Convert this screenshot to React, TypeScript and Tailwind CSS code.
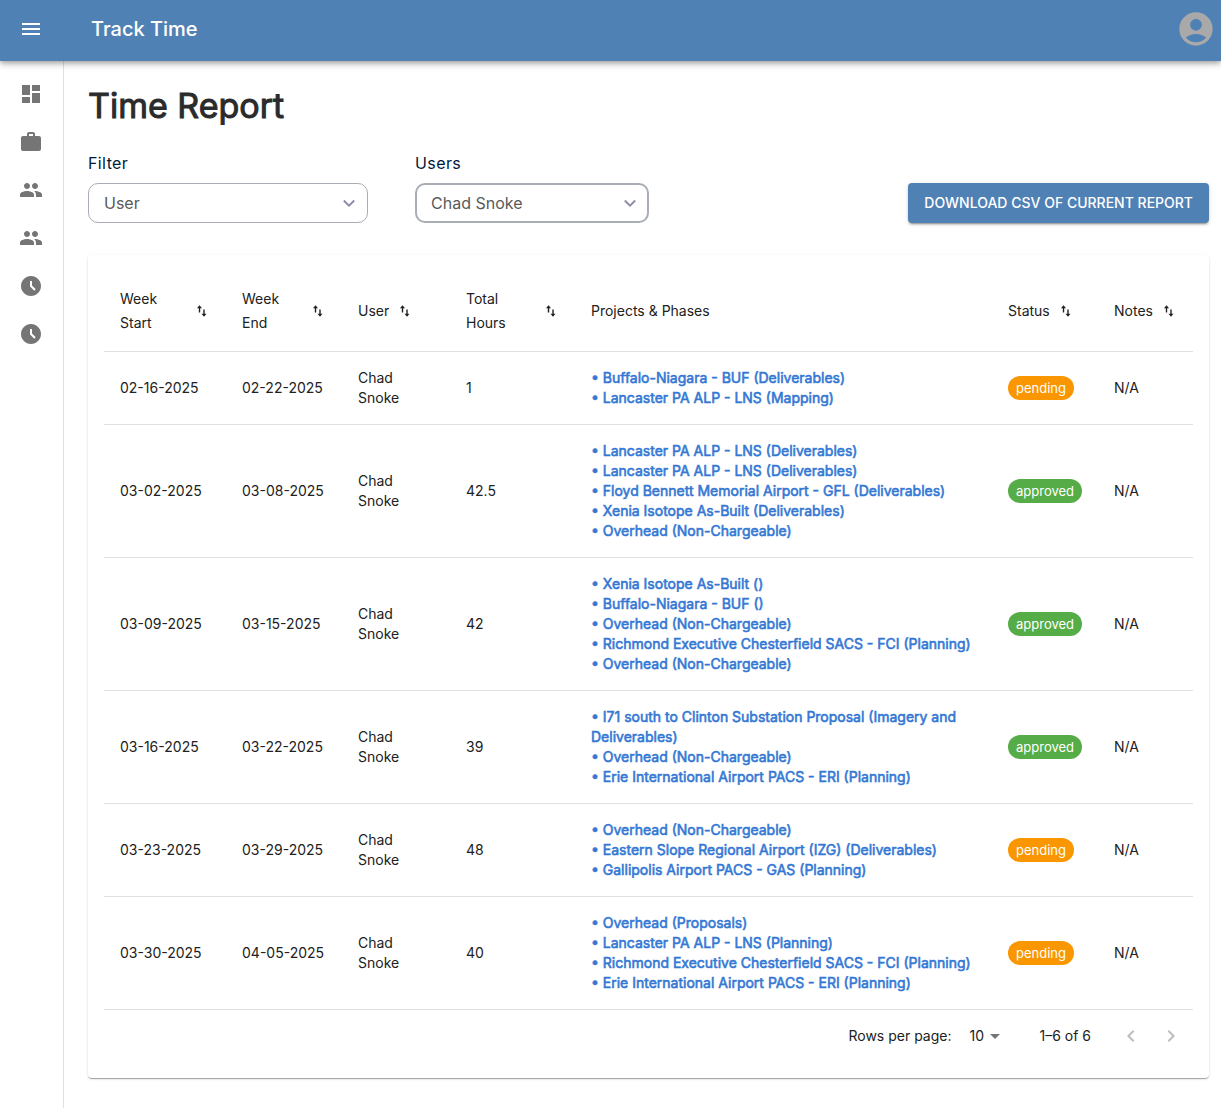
import React from 'react';
import {
  MdAccessTimeFilled,
  MdAccountCircle,
  MdArrowDropDown,
  MdDashboard,
  MdKeyboardArrowLeft,
  MdKeyboardArrowRight,
  MdMenu,
  MdPeople,
  MdWork,
} from 'react-icons/md';

interface Entry {
  start: string;
  end: string;
  user: string;
  hours: number;
  projects: string[];
  status: 'pending' | 'approved';
  notes: string;
}

const entries: Entry[] = [
  {
    start: '02-16-2025',
    end: '02-22-2025',
    user: 'Chad Snoke',
    hours: 1,
    projects: ['Buffalo-Niagara - BUF (Deliverables)', 'Lancaster PA ALP - LNS (Mapping)'],
    status: 'pending',
    notes: 'N/A',
  },
  {
    start: '03-02-2025',
    end: '03-08-2025',
    user: 'Chad Snoke',
    hours: 42.5,
    projects: [
      'Lancaster PA ALP - LNS (Deliverables)',
      'Lancaster PA ALP - LNS (Deliverables)',
      'Floyd Bennett Memorial Airport - GFL (Deliverables)',
      'Xenia Isotope As-Built (Deliverables)',
      'Overhead (Non-Chargeable)',
    ],
    status: 'approved',
    notes: 'N/A',
  },
  {
    start: '03-09-2025',
    end: '03-15-2025',
    user: 'Chad Snoke',
    hours: 42,
    projects: [
      'Xenia Isotope As-Built ()',
      'Buffalo-Niagara - BUF ()',
      'Overhead (Non-Chargeable)',
      'Richmond Executive Chesterfield SACS - FCI (Planning)',
      'Overhead (Non-Chargeable)',
    ],
    status: 'approved',
    notes: 'N/A',
  },
  {
    start: '03-16-2025',
    end: '03-22-2025',
    user: 'Chad Snoke',
    hours: 39,
    projects: [
      'I71 south to Clinton Substation Proposal (Imagery and Deliverables)',
      'Overhead (Non-Chargeable)',
      'Erie International Airport PACS - ERI (Planning)',
    ],
    status: 'approved',
    notes: 'N/A',
  },
  {
    start: '03-23-2025',
    end: '03-29-2025',
    user: 'Chad Snoke',
    hours: 48,
    projects: [
      'Overhead (Non-Chargeable)',
      'Eastern Slope Regional Airport (IZG) (Deliverables)',
      'Gallipolis Airport PACS - GAS (Planning)',
    ],
    status: 'pending',
    notes: 'N/A',
  },
  {
    start: '03-30-2025',
    end: '04-05-2025',
    user: 'Chad Snoke',
    hours: 40,
    projects: [
      'Overhead (Proposals)',
      'Lancaster PA ALP - LNS (Planning)',
      'Richmond Executive Chesterfield SACS - FCI (Planning)',
      'Erie International Airport PACS - ERI (Planning)',
    ],
    status: 'pending',
    notes: 'N/A',
  },
];

const columns = [
  { label: 'Week Start', width: 'w-[122px]', sortable: true },
  { label: 'Week End', width: 'w-[116px]', sortable: true },
  { label: 'User', width: 'w-[108px]', sortable: true },
  { label: 'Total Hours', width: 'w-[125px]', sortable: true },
  { label: 'Projects & Phases', width: '', sortable: false },
  { label: 'Status', width: 'w-[106px]', sortable: true },
  { label: 'Notes', width: 'w-[95px]', sortable: true },
];

const navItems = [
  { label: 'Dashboard', icon: MdDashboard },
  { label: 'Projects', icon: MdWork },
  { label: 'Clients', icon: MdPeople },
  { label: 'Employees', icon: MdPeople },
  { label: 'Time Entry', icon: MdAccessTimeFilled },
  { label: 'Time Report', icon: MdAccessTimeFilled },
];

const SortIcon = () => (
  <svg viewBox="0 0 16 16" className="h-4 w-4 shrink-0" fill="none" stroke="currentColor" strokeWidth="1.4" aria-hidden="true">
    <path d="M5.5 9.5V3.5" />
    <path d="M3 5.2 5.5 2.2 8 5.2Z" fill="currentColor" stroke="none" />
    <path d="M10 6.5V12.5" />
    <path d="M7.5 10.8 10 13.8 12.5 10.8Z" fill="currentColor" stroke="none" />
  </svg>
);

const Chevron = () => (
  <svg
    viewBox="0 0 16 16"
    className="pointer-events-none absolute right-[11px] top-3 h-4 w-4 text-[#8d88a8]"
    fill="none"
    stroke="currentColor"
    strokeWidth="1.8"
    aria-hidden="true"
  >
    <path d="M2.8 5.5 8 10.7 13.2 5.5" />
  </svg>
);

interface SelectFieldProps {
  id: string;
  label: string;
  options: string[];
  className: string;
}

const SelectField: React.FC<SelectFieldProps> = ({ id, label, options, className }) => (
  <div>
    <label htmlFor={id} className="block text-base tracking-wide text-[#00193b]">{label}</label>
    <div className="relative mt-2">
      <select
        id={id}
        className={`block h-10 appearance-none rounded-[10px] border-[#a9adb5] bg-white text-base text-[#5a5a5a] outline-none ${className}`}
      >
        {options.map((option) => (
          <option key={option}>{option}</option>
        ))}
      </select>
      <Chevron />
    </div>
  </div>
);

const Header = () => (
  <header className="relative z-10 flex h-[61px] items-center bg-[#5081b5] pb-1 pl-[19px] pr-[5px] text-white shadow-[0_2px_4px_-1px_rgba(0,0,0,0.2),0_4px_5px_0_rgba(0,0,0,0.14),0_1px_10px_0_rgba(0,0,0,0.12)]">
    <button aria-label="Open menu">
      <MdMenu className="h-6 w-6" />
    </button>
    <span className="ml-12 flex-1 text-xl font-medium">Track Time</span>
    <button aria-label="Account">
      <MdAccountCircle className="h-10 w-10 text-[#a9a9a9]" />
    </button>
  </header>
);

const Sidebar = () => (
  <nav className="w-16 shrink-0 border-r border-[#e0e0e0] pt-[9px]">
    <ul>
      {navItems.map(({ label, icon: Icon }) => (
        <li key={label}>
          <a href="#" aria-label={label} className="flex h-12 items-center pl-[19px] text-[#757575]">
            <Icon className="h-6 w-6" />
          </a>
        </li>
      ))}
    </ul>
  </nav>
);

const StatusBadge = ({ status }: { status: Entry['status'] }) => (
  <span
    className={`inline-flex h-6 items-center rounded-full px-2 text-[13px] text-white ${
      status === 'approved' ? 'bg-[#56ad47]' : 'bg-[#f99600]'
    }`}
  >
    {status}
  </span>
);

const ReportTable = () => (
  <table className="w-full table-fixed border-separate border-spacing-0 text-left text-sm text-[#212121]">
    <thead>
      <tr>
        {columns.map(({ label, width, sortable }) => (
          <th key={label} scope="col" className={`border-b border-[#e0e0e0] p-4 font-normal leading-6 ${width}`}>
            {sortable ? (
              <button className="flex items-center gap-2 text-left">
                <span>{label}</span>
                <SortIcon />
              </button>
            ) : (
              label
            )}
          </th>
        ))}
      </tr>
    </thead>
    <tbody>
      {entries.map((entry) => (
        <tr key={entry.start}>
          <td className="border-b border-[#e0e0e0] p-4">{entry.start}</td>
          <td className="border-b border-[#e0e0e0] p-4">{entry.end}</td>
          <td className="border-b border-[#e0e0e0] p-4">
            <div className="w-12">{entry.user}</div>
          </td>
          <td className="border-b border-[#e0e0e0] p-4">{entry.hours}</td>
          <td className="border-b border-[#e0e0e0] p-4">
            {entry.projects.map((project, i) => (
              <a key={i} href="#" className="block text-[#3578d4] [-webkit-text-stroke:0.6px_#3578d4]">{`• ${project}`}</a>
            ))}
          </td>
          <td className="border-b border-[#e0e0e0] p-4">
            <StatusBadge status={entry.status} />
          </td>
          <td className="border-b border-[#e0e0e0] p-4">{entry.notes}</td>
        </tr>
      ))}
    </tbody>
  </table>
);

const Pagination = () => (
  <div className="flex h-[52px] items-center justify-end pr-0.5 text-sm text-[#212121]">
    <label htmlFor="rows-per-page">Rows per page:</label>
    <div className="relative ml-4 mr-8">
      <select id="rows-per-page" className="w-10 appearance-none bg-transparent pl-0.5 outline-none">
        <option>10</option>
        <option>25</option>
        <option>50</option>
      </select>
      <MdArrowDropDown className="pointer-events-none absolute -top-0.5 right-0 h-6 w-6 text-[#757575]" />
    </div>
    <span>1–6 of 6</span>
    <div className="ml-5 flex text-[#bdbdbd]">
      <button aria-label="Previous page" className="p-2" disabled>
        <MdKeyboardArrowLeft className="h-6 w-6" />
      </button>
      <button aria-label="Next page" className="p-2" disabled>
        <MdKeyboardArrowRight className="h-6 w-6" />
      </button>
    </div>
  </div>
);

export default function App() {
  return (
    <div className="flex min-h-screen flex-col bg-white font-['Inter',sans-serif]">
      <Header />
      <div className="flex flex-1">
        <Sidebar />
        <main className="min-w-0 flex-1 pb-[30px] pl-6 pr-3 pt-6">
          <h1 className="text-[34px] leading-[42px] text-[#2b2b2b] [-webkit-text-stroke:1px_#2b2b2b]">Time Report</h1>
          <div className="mt-6 flex items-end">
            <SelectField id="filter" label="Filter" options={['User', 'Project']} className="w-[280px] border px-[15px]" />
            <div className="ml-[47px]">
              <SelectField id="users" label="Users" options={['Chad Snoke']} className="w-[234px] border-2 px-[14px]" />
            </div>
            <button className="ml-auto h-10 rounded bg-[#5081b5] px-4 text-sm font-medium uppercase text-white shadow-[0_3px_1px_-2px_rgba(0,0,0,0.2),0_2px_2px_0_rgba(0,0,0,0.14),0_1px_5px_0_rgba(0,0,0,0.12)]">
              Download CSV of current report
            </button>
          </div>
          <section className="mt-8 rounded p-4 shadow-[0_2px_1px_-1px_rgba(0,0,0,0.2),0_1px_1px_0_rgba(0,0,0,0.14),0_1px_3px_0_rgba(0,0,0,0.12)]">
            <ReportTable />
            <Pagination />
          </section>
        </main>
      </div>
    </div>
  );
}
